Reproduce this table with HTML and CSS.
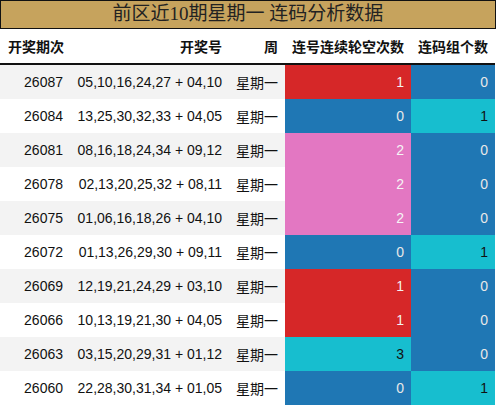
FILE: index.html
```html
<!DOCTYPE html>
<html>
<head>
<meta charset="utf-8">
<link rel="stylesheet" href="styles.css">
</head>
<body>
<div class="wrap">
  <div class="title">前区近10期星期一 连码分析数据</div>
  <table class="tbl">
    <colgroup>
      <col class="c1"><col class="c2"><col class="c3"><col class="c4"><col class="c5">
    </colgroup>
    <thead>
      <tr><th class="left">开奖期次</th><th>开奖号</th><th>周</th><th>连号连续轮空次数</th><th>连码组个数</th></tr>
    </thead>
    <tbody>
      <tr><td>26087</td><td>05,10,16,24,27 + 04,10</td><td>星期一</td><td class="red">1</td><td class="blue">0</td></tr>
      <tr><td>26084</td><td>13,25,30,32,33 + 04,05</td><td>星期一</td><td class="blue">0</td><td class="cyan">1</td></tr>
      <tr><td>26081</td><td>08,16,18,24,34 + 09,12</td><td>星期一</td><td class="pink">2</td><td class="blue">0</td></tr>
      <tr><td>26078</td><td>02,13,20,25,32 + 08,11</td><td>星期一</td><td class="pink">2</td><td class="blue">0</td></tr>
      <tr><td>26075</td><td>01,06,16,18,26 + 04,10</td><td>星期一</td><td class="pink">2</td><td class="blue">0</td></tr>
      <tr><td>26072</td><td>01,13,26,29,30 + 09,11</td><td>星期一</td><td class="blue">0</td><td class="cyan">1</td></tr>
      <tr><td>26069</td><td>12,19,21,24,29 + 03,10</td><td>星期一</td><td class="red">1</td><td class="blue">0</td></tr>
      <tr><td>26066</td><td>10,13,19,21,30 + 04,05</td><td>星期一</td><td class="red">1</td><td class="blue">0</td></tr>
      <tr><td>26063</td><td>03,15,20,29,31 + 01,12</td><td>星期一</td><td class="cyan">3</td><td class="blue">0</td></tr>
      <tr><td>26060</td><td>22,28,30,31,34 + 01,05</td><td>星期一</td><td class="blue">0</td><td class="cyan">1</td></tr>
    </tbody>
  </table>
</div>
</body>
</html>
```
FILE: styles.css
```css
html, body {
  margin: 0;
  padding: 0;
  background: #ffffff;
}
.wrap {
  width: 496px;
  font-family: "Liberation Sans", "Noto Sans CJK SC", sans-serif;
  color: #111;
}
.title {
  box-sizing: border-box;
  height: 29px;
  background: #c6a35d;
  border: 1px solid #111;
  text-align: center;
  font-family: "Liberation Serif", "Noto Sans CJK SC", serif;
  font-size: 19px;
  line-height: 26px;
  color: #222;
}
.tbl {
  width: 495px;
  border-collapse: collapse;
  table-layout: fixed;
  font-size: 14px;
}
.c1 { width: 70px; }
.c2 { width: 159px; }
.c3 { width: 56px; }
.c4 { width: 126px; }
.c5 { width: 84px; }
.tbl th {
  height: 34px;
  padding: 0 7px 0 0;
  text-align: right;
  font-weight: bold;
  border-bottom: 2px solid #111;
  white-space: nowrap;
}
.tbl th.left {
  text-align: left;
  padding-left: 8px;
}
.tbl td {
  height: 34px;
  padding: 0 7px 0 0;
  text-align: right;
  white-space: nowrap;
}
.tbl tbody tr:nth-child(odd) td { background: #f3f3f3; }
.tbl tbody tr:nth-child(even) td { background: #ffffff; }
.tbl tbody tr td.red { background: #d62728; color: #f2f2f2; }
.tbl tbody tr td.blue { background: #1f77b4; color: #e8e8e8; }
.tbl tbody tr td.pink { background: #e377c2; color: #f5f5f5; }
.tbl tbody tr td.cyan { background: #17becf; color: #111; }
```
